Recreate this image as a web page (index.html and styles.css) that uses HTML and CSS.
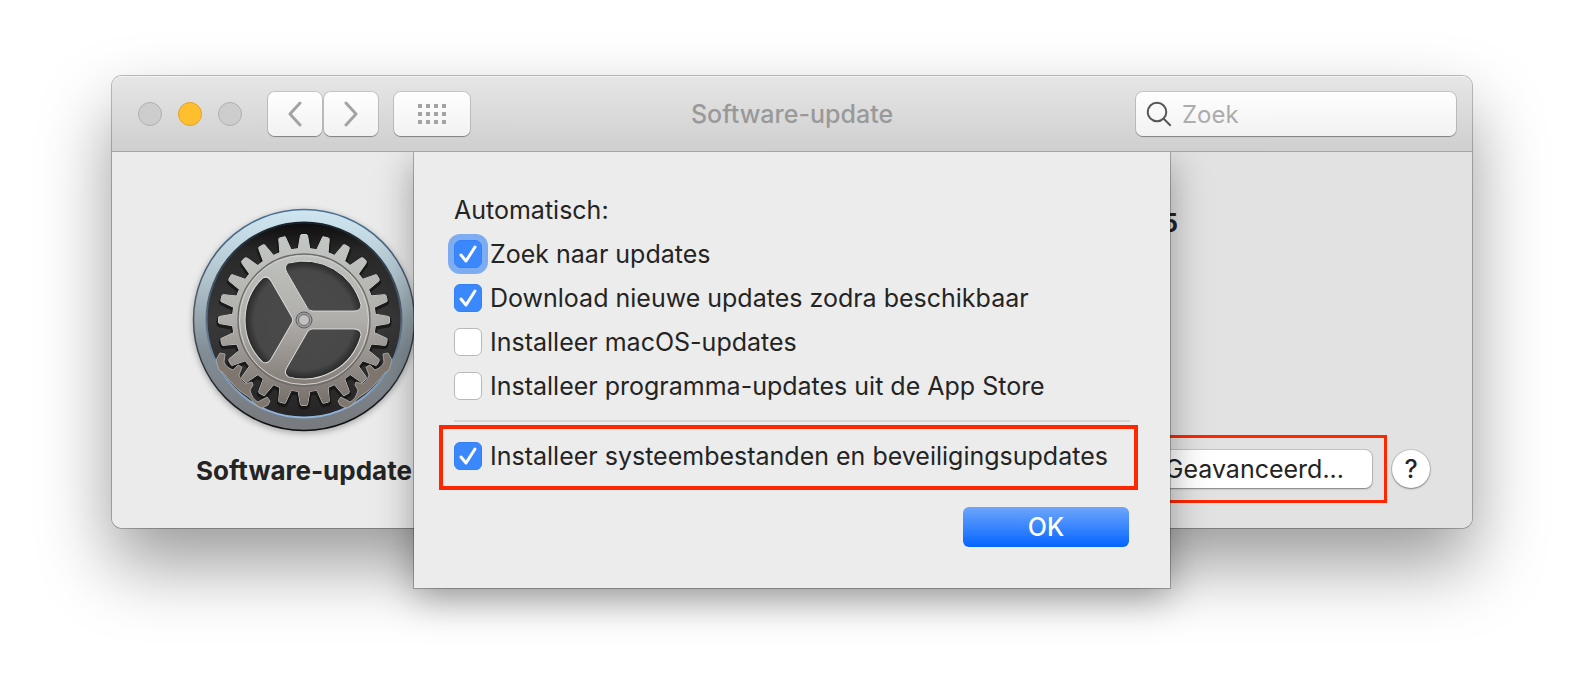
FILE: index.html
```html
<!DOCTYPE html>
<html lang="nl">
<head>
  <meta charset="UTF-8">
  <title>Software-update</title>
  <link rel="stylesheet" href="styles.css">
</head>
<body>

  <main class="window">
    <!-- Toolbar -->
    <header class="toolbar">
      <div class="toolbar-left">
        <div class="lights">
          <button class="light" aria-label="Sluit"></button>
          <button class="light yellow" aria-label="Minimaliseer"></button>
          <button class="light" aria-label="Vergroot"></button>
        </div>
        <div class="nav">
          <button class="tool-btn" aria-label="Vorige">
            <svg width="16" height="26" viewBox="0 0 16 26"><path d="M13 2L3 13l10 11"/></svg>
          </button>
          <button class="tool-btn" aria-label="Volgende">
            <svg width="16" height="26" viewBox="0 0 16 26"><path d="M3 2l10 11L3 24"/></svg>
          </button>
        </div>
        <button class="tool-btn grid-btn" aria-label="Toon alles">
          <svg width="28" height="20" viewBox="0 0 28 20"><path class="dots" d="M0 0h4v4H0zM8 0h4v4H8zM16 0h4v4h-4zM24 0h4v4h-4zM0 8h4v4H0zM8 8h4v4H8zM16 8h4v4h-4zM24 8h4v4h-4zM0 16h4v4H0zM8 16h4v4H8zM16 16h4v4h-4zM24 16h4v4h-4z"/></svg>
        </button>
      </div>
      <h1 class="title">Software-update</h1>
      <div class="search">
        <svg width="26" height="26" viewBox="0 0 26 26"><circle cx="11" cy="11" r="9.3"/><path d="M17.7 17.7l7 7"/></svg>
        <input type="search" placeholder="Zoek" aria-label="Zoek">
      </div>
    </header>

    <div class="content">
      <section class="side">
        <svg class="gear" viewBox="-112 -112 224 224" aria-hidden="true">
          <defs>
            <linearGradient id="ring" x1="0" y1="0" x2="0" y2="1">
              <stop offset="0" stop-color="#cfe6f0"/>
              <stop offset=".3" stop-color="#b3c6d0"/>
              <stop offset=".65" stop-color="#818c95"/>
              <stop offset="1" stop-color="#77797d"/>
            </linearGradient>
            <linearGradient id="edge" x1="0" y1="0" x2="0" y2="1">
              <stop offset="0" stop-color="#4a6f94"/>
              <stop offset=".5" stop-color="#4c535b"/>
              <stop offset="1" stop-color="#0d0d0f"/>
            </linearGradient>
            <linearGradient id="rim" x1="0" y1="0" x2="0" y2="1">
              <stop offset="0" stop-color="#16212b"/>
              <stop offset=".5" stop-color="#5a6f84"/>
              <stop offset="1" stop-color="#8fb4dc"/>
            </linearGradient>
            <linearGradient id="dark" gradientUnits="userSpaceOnUse" x1="0" y1="-98" x2="0" y2="98">
              <stop offset="0" stop-color="#0c0c0c"/>
              <stop offset=".15" stop-color="#292828"/>
              <stop offset=".5" stop-color="#3a3939"/>
              <stop offset="1" stop-color="#262424"/>
            </linearGradient>
            <radialGradient id="inside" gradientUnits="userSpaceOnUse" cx="0" cy="0" r="62">
              <stop offset="0" stop-color="#4a4a4a"/>
              <stop offset=".8" stop-color="#484848"/>
              <stop offset="1" stop-color="#1f1f1f"/>
            </radialGradient>
            <linearGradient id="metal" gradientUnits="userSpaceOnUse" x1="0" y1="-86" x2="0" y2="86">
              <stop offset="0" stop-color="#c3c8c4"/>
              <stop offset=".5" stop-color="#b0aeaa"/>
              <stop offset="1" stop-color="#766d68"/>
            </linearGradient>
            <path id="tooth" d="M-6 -70L-3.600 -84Q-3.300 -85.500 -2 -85.500H2Q3.300 -85.500 3.600 -84L6 -70Z"/>
            <g id="quarter">
              <use href="#tooth"/>
              <use href="#tooth" transform="rotate(15)"/>
              <use href="#tooth" transform="rotate(30)"/>
              <use href="#tooth" transform="rotate(45)"/>
              <use href="#tooth" transform="rotate(60)"/>
              <use href="#tooth" transform="rotate(75)"/>
            </g>
            <g id="cog">
              <use href="#quarter"/>
              <use href="#quarter" transform="rotate(90)"/>
              <use href="#quarter" transform="rotate(180)"/>
              <use href="#quarter" transform="rotate(270)"/>
              <circle r="71.500"/>
            </g>
            <path id="hole" d="M9 -9H50Q57 -9 57 -15A59 59 0 0 0 -15.500 -56.900Q-20.500 -54 -17.200 -47.800L3.300 -12.300Q5 -9 9 -9Z"/>
            <g id="holes">
              <use href="#hole"/>
              <use href="#hole" transform="rotate(120)"/>
              <use href="#hole" transform="rotate(240)"/>
            </g>
            <mask id="cogMask" maskUnits="userSpaceOnUse" x="-100" y="-100" width="200" height="200">
              <use href="#cog" fill="#fff"/>
              <use href="#holes" fill="#000"/>
            </mask>
            <path id="rack" d="M-84 33L-79 34L-80 42Q-79 46 -75 48L-71 50L-66 45L-62 47L-65 55Q-64 61 -59 64L-52 62L-51 65L-54 70Q-52 79 -46 82L-37 77L-34 81L-36 85L-42 88Q-47 87 -54 78Q-66 71 -75 60Q-80 52 -85 50Q-87 44 -88 40Z"/>
          </defs>
          <circle r="110.500" fill="url(#ring)" stroke="url(#edge)" stroke-width="1.500"/>
          <circle r="97.500" fill="url(#dark)" stroke="url(#rim)" stroke-width="2"/>
          <use href="#cog" fill="#111" stroke="#111" stroke-width="4" opacity=".7" transform="translate(0 2)"/>
          <g fill="#7f7670" stroke="#b5b3b3" stroke-width=".8">
            <use href="#rack"/>
            <use href="#rack" transform="scale(-1 1)"/>
          </g>
          <use href="#cog" fill="none" stroke="#d5dad9" stroke-width="1"/>
          <use href="#holes" fill="url(#inside)" stroke="#111" stroke-width="1"/>
          <rect x="-90" y="-90" width="180" height="180" fill="url(#metal)" mask="url(#cogMask)"/>
          <circle r="66" fill="none" stroke="#6c6b69" stroke-width="1.300"/>
          <circle r="64.500" fill="none" stroke="#d0d1ce" stroke-width="1"/>
          <use href="#holes" fill="none" stroke="#dcdedc" stroke-width="1"/>
          <circle r="8" fill="#9d9c9a" stroke="#5a6067" stroke-width="1"/>
          <circle r="5.500" fill="#c2c1bf" stroke="#6a6a6a" stroke-width="1"/>
        </svg>
        <h2 class="name">Software-update</h2>
      </section>

      <section class="main">
        <p class="version">5</p>
        <div class="actions">
          <div class="marked">
            <button class="advanced">Geavanceerd...</button>
          </div>
          <button class="help" aria-label="Help">?</button>
        </div>
      </section>

      <!-- Sheet with the automatic update options -->
      <form class="sheet" role="dialog" aria-labelledby="sheetTitle">
        <p class="sheet-title" id="sheetTitle">Automatisch:</p>
        <label class="option">
          <span class="check focused"><input type="checkbox" checked><svg viewBox="0 0 28 28"><path d="M7 15l5 6 9-14"/></svg></span>
          Zoek naar updates
        </label>
        <label class="option">
          <span class="check"><input type="checkbox" checked><svg viewBox="0 0 28 28"><path d="M7 15l5 6 9-14"/></svg></span>
          Download nieuwe updates zodra beschikbaar
        </label>
        <label class="option">
          <span class="check"><input type="checkbox"></span>
          Installeer macOS-updates
        </label>
        <label class="option">
          <span class="check"><input type="checkbox"></span>
          Installeer programma-updates uit de App Store
        </label>
        <hr class="divider">
        <label class="option important">
          <span class="check"><input type="checkbox" checked><svg viewBox="0 0 28 28"><path d="M7 15l5 6 9-14"/></svg></span>
          Installeer systeembestanden en beveiligingsupdates
        </label>
        <button type="button" class="ok">OK</button>
      </form>
    </div>
  </main>

</body>
</html>
```
FILE: styles.css
```css
* {
  box-sizing: border-box;
}
body {
  margin: 0;
  min-height: 100vh;
  padding: 76px 112px 88px;
  background: #fff;
  color: #242424;
  font-family: Inter, "Liberation Sans", sans-serif;
  font-size: 25px;
}
h1, h2, p {
  margin: 0;
}
button, input {
  font: inherit;
  color: inherit;
  margin: 0;
}
button {
  border: 0;
  padding: 0;
}
.window {
  border-radius: 10px;
  box-shadow: 0 0 0 1px rgba(0,0,0,0.25), 0 36px 72px rgba(0,0,0,0.4);
}

/* Toolbar */
.toolbar {
  position: relative;
  z-index: 2;
  display: grid;
  grid-template-columns: 1fr auto 1fr;
  align-items: center;
  height: 76px;
  padding: 0 16px;
  background: linear-gradient(#e6e6e6, #cfcfcf);
  border-top: 1px solid #f3f3f3;
  border-bottom: 1px solid #a6a6a6;
  border-radius: 10px 10px 0 0;
}
.toolbar-left {
  display: flex;
  align-items: center;
}
.lights {
  display: flex;
  gap: 16px;
  margin: 0 26px 0 10px;
}
.light {
  width: 24px;
  height: 24px;
  border-radius: 50%;
  background: #cdcdcd;
  border: 1px solid #b0b0b0;
}
.light.yellow {
  background: #ffbf2f;
  border-color: #e2a22c;
}
.nav {
  display: flex;
  gap: 2px;
  margin-right: 16px;
}
.tool-btn {
  display: flex;
  align-items: center;
  justify-content: center;
  width: 54px;
  height: 44px;
  border-radius: 7px;
  background: linear-gradient(#fefefe, #f2f2f2);
  box-shadow: 0 0 0 1px rgba(0,0,0,0.12), 0 1px 1px rgba(0,0,0,0.3);
}
.tool-btn svg {
  fill: none;
  stroke: #a3a3a3;
  stroke-width: 3;
  stroke-linecap: round;
  stroke-linejoin: round;
}
.tool-btn .dots {
  fill: #a3a3a3;
  stroke: none;
}
.grid-btn {
  width: 76px;
}
.title {
  font-size: 25px;
  font-weight: 500;
  color: #999;
}
.search {
  justify-self: end;
  display: flex;
  align-items: center;
  gap: 10px;
  width: 320px;
  height: 44px;
  padding: 0 10px;
  border-radius: 7px;
  background: linear-gradient(#fefefe, #f2f2f2);
  box-shadow: 0 0 0 1px rgba(0,0,0,0.12), 0 1px 1px rgba(0,0,0,0.3);
}
.search svg {
  flex: none;
  fill: none;
  stroke: #565656;
  stroke-width: 2;
}
.search input {
  width: 100%;
  padding: 0;
  border: 0;
  outline: 0;
  background: none;
  font-size: 24px;
}
.search input::placeholder {
  color: #acacac;
}

/* Window content */
.content {
  position: relative;
  display: flex;
  min-height: 376px;
}
.side {
  flex: none;
  display: flex;
  flex-direction: column;
  align-items: center;
  width: 384px;
  padding-top: 56px;
  background: #ebebeb;
  border-radius: 0 0 0 10px;
}
.gear {
  width: 224px;
  height: 224px;
  filter: drop-shadow(0 2px 3px rgba(0,0,0,0.3));
}
.name {
  margin-top: 24px;
  font-size: 26px;
  line-height: 30px;
  font-weight: 700;
}
.main {
  flex: 1;
  display: flex;
  flex-direction: column;
  justify-content: space-between;
  align-items: flex-end;
  padding: 56px 42px 25px 0;
  background: #e2e2e2;
  border-radius: 0 0 10px 0;
}
.version {
  margin-right: 252px;
  line-height: 30px;
  font-weight: 700;
}
.actions {
  display: flex;
  align-items: center;
  gap: 5px;
}
.marked {
  padding: 12px;
  border: 3px solid #ff2600;
}
.advanced {
  display: block;
  height: 38px;
  padding: 0 28px;
  border-radius: 7px;
  background: #fff;
  box-shadow: 0 0 0 1px rgba(0,0,0,0.12), 0 1px 2px rgba(0,0,0,0.35);
}
.help {
  width: 38px;
  height: 38px;
  border-radius: 50%;
  background: #fff;
  font-weight: 500;
  box-shadow: 0 0 0 1px rgba(0,0,0,0.12), 0 1px 2px rgba(0,0,0,0.35);
}

/* Sheet */
.sheet {
  position: absolute;
  top: 0;
  left: 0;
  right: 0;
  width: 756px;
  max-width: 100%;
  margin: 0 auto;
  padding: 36px 40px 41px;
  background: #ececec;
  box-shadow: 0 0 0 1px rgba(0,0,0,0.25), 0 10px 36px rgba(0,0,0,0.35);
}
.sheet-title, .option {
  line-height: 44px;
}
.option {
  display: flex;
  align-items: center;
  gap: 8px;
  white-space: nowrap;
}
.check {
  position: relative;
  flex: none;
  width: 28px;
  height: 28px;
  border-radius: 6px;
}
.check input {
  appearance: none;
  display: block;
  width: 28px;
  height: 28px;
  border: 1px solid #b9b9b9;
  border-radius: 6px;
  background: #fff;
}
.check input:checked {
  background: #3b88fd;
  border-color: #3580f5;
}
.check svg {
  position: absolute;
  inset: 0;
  pointer-events: none;
  fill: none;
  stroke: #fff;
  stroke-width: 3;
  stroke-linecap: round;
  stroke-linejoin: round;
}
.check.focused {
  box-shadow: 0 0 0 6px #7eacf0;
}
.divider {
  height: 2px;
  margin: 12px 0 3px;
  border: 0;
  background: #d5d5d5;
}
.important {
  height: 65px;
  margin: 0 -8px 0 -15px;
  padding: 0 0 3px 11px;
  border: 4px solid #ff2600;
}
.ok {
  display: block;
  width: 166px;
  height: 40px;
  margin: 17px 1px 0 auto;
  border-radius: 6px;
  background: linear-gradient(#6ea6fb, #0465ff);
  color: #fff;
  font-weight: 500;
}
```
